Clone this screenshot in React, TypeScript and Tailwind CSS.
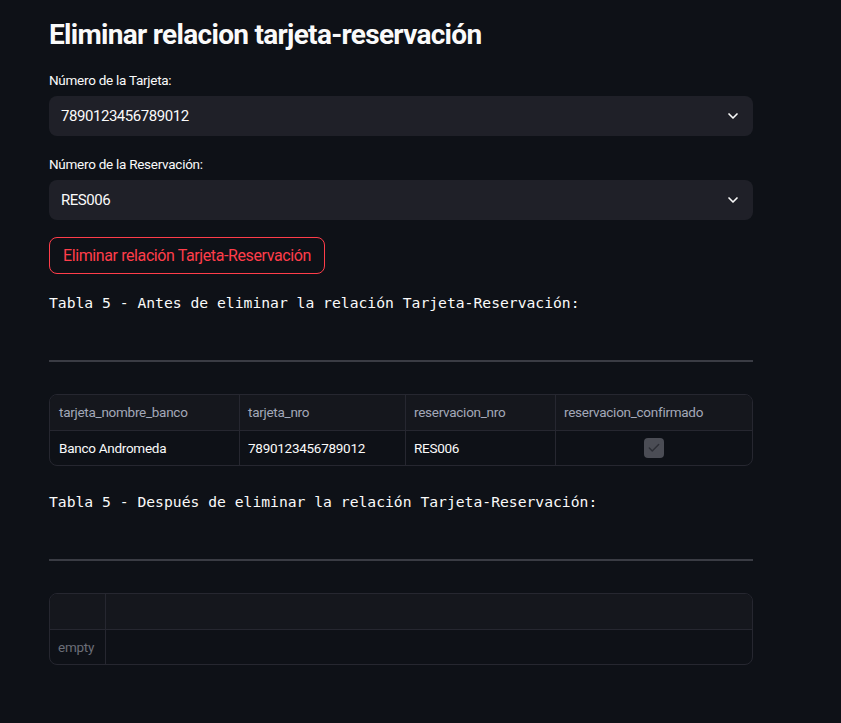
import { ChevronDown, Check } from 'lucide-react';

const sans = { fontFamily: 'Roboto, "Noto Sans", sans-serif' };
const mono = { fontFamily: '"DejaVu Sans Mono", "Liberation Mono", monospace' };

interface Row {
  tarjeta_nombre_banco: string;
  tarjeta_nro: string;
  reservacion_nro: string;
  reservacion_confirmado: boolean;
}

const rows: Row[] = [
  {
    tarjeta_nombre_banco: 'Banco Andromeda',
    tarjeta_nro: '7890123456789012',
    reservacion_nro: 'RES006',
    reservacion_confirmado: true,
  },
];

function SelectBox({ label, value }: { label: string; value: string }) {
  return (
    <div className="flex flex-col gap-[7px]">
      <label className="text-[13.5px] leading-[18px] tracking-[-0.02em] text-[#fafafa]">{label}</label>
      <div className="h-[40px] rounded-[8px] bg-[#1f2028] flex items-center justify-between pl-[12px] pr-[12px]">
        <span className="text-[15px] tracking-[-0.03em] text-[#fafafa]">{value}</span>
        <ChevronDown className="w-[16px] h-[16px] text-[#fafafa]" strokeWidth={2.5} />
      </div>
    </div>
  );
}

export default function App() {
  return (
    <div className="min-h-screen bg-[#0e1117] text-[#fafafa]" style={sans}>
      <div className="w-[704px] ml-[49px] pt-[16px] pb-[40px] flex flex-col">
        <h1 className="text-[28px] leading-[38px] font-bold tracking-[-0.025em]">
          Eliminar relacion tarjeta-reservación
        </h1>

        <div className="mt-[17px] flex flex-col gap-[19px]">
          <SelectBox label="Número de la Tarjeta:" value="7890123456789012" />
          <SelectBox label="Número de la Reservación:" value="RES006" />
        </div>

        <div className="mt-[17px]">
          <button className="h-[37px] px-[13px] rounded-[8px] border border-[#ff3d4a] text-[#ff3d4a] text-[16px] tracking-[-0.025em]">
            Eliminar relación Tarjeta-Reservación
          </button>
        </div>

        <p className="mt-[19px] text-[14.7px] leading-[20px] text-[#fafafa] whitespace-pre" style={mono}>
          Tabla 5 - Antes de eliminar la relación Tarjeta-Reservación:
        </p>
        <div className="mt-[47px] h-[2px] bg-[#3a3c44]" />

        {/* tabla antes */}
        <div className="mt-[32px] rounded-[8px] border border-[#262730] overflow-hidden text-[13.5px] tracking-[-0.02em]">
          <div className="grid grid-cols-[190px_166px_150px_1fr] h-[36px] bg-[#15171d] border-b border-[#262730] text-[#a3a8b8]">
            <div className="flex items-center px-[9px] border-r border-[#262730]">tarjeta_nombre_banco</div>
            <div className="flex items-center px-[8px] border-r border-[#262730]">tarjeta_nro</div>
            <div className="flex items-center px-[8px] border-r border-[#262730]">reservacion_nro</div>
            <div className="flex items-center px-[8px]">reservacion_confirmado</div>
          </div>
          {rows.map((r) => (
            <div key={r.tarjeta_nro} className="grid grid-cols-[190px_166px_150px_1fr] h-[34px] text-[#fafafa]">
              <div className="flex items-center px-[9px] border-r border-[#262730]">{r.tarjeta_nombre_banco}</div>
              <div className="flex items-center px-[8px] border-r border-[#262730]">{r.tarjeta_nro}</div>
              <div className="flex items-center px-[8px] border-r border-[#262730]">{r.reservacion_nro}</div>
              <div className="flex items-center justify-center">
                <div className="w-[20px] h-[20px] rounded-[4px] bg-[#4b4d55] flex items-center justify-center">
                  {r.reservacion_confirmado && <Check className="w-[14px] h-[14px] text-[#2d2f36]" strokeWidth={2.5} />}
                </div>
              </div>
            </div>
          ))}
        </div>

        <p className="mt-[26px] text-[14.7px] leading-[20px] text-[#fafafa] whitespace-pre" style={mono}>
          Tabla 5 - Después de eliminar la relación Tarjeta-Reservación:
        </p>
        <div className="mt-[47px] h-[2px] bg-[#3a3c44]" />

        {/* tabla despues */}
        <div className="mt-[32px] rounded-[8px] border border-[#262730] overflow-hidden text-[13.5px] tracking-[-0.02em]">
          <div className="grid grid-cols-[56px_1fr] h-[36px] bg-[#15171d] border-b border-[#262730]">
            <div className="border-r border-[#262730]" />
            <div />
          </div>
          <div className="grid grid-cols-[56px_1fr] h-[34px]">
            <div className="flex items-center px-[8px] border-r border-[#262730] text-[#6b6e78]">empty</div>
            <div />
          </div>
        </div>
      </div>
    </div>
  );
}
